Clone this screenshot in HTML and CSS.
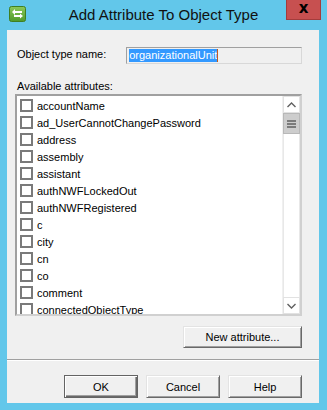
FILE: index.html
```html
<!DOCTYPE html>
<html>
<head>
<meta charset="utf-8">
<link rel="stylesheet" href="styles.css">
</head>
<body>
<div class="window">
  <div class="titlebar">
    <div class="app-icon">
      <svg width="17" height="16" viewBox="0 0 17 16">
        <defs>
          <linearGradient id="g" x1="0" y1="0" x2="0" y2="1">
            <stop offset="0" stop-color="#8cc95a"/>
            <stop offset="1" stop-color="#4e9a2a"/>
          </linearGradient>
        </defs>
        <rect x="0.5" y="0.5" width="16" height="15" rx="2" fill="url(#g)" stroke="#3f7f22"/>
        <path d="M3 6 L6 3 L6 5 L13 5 L13 7 L6 7 L6 9 Z" fill="#fff"/>
        <path d="M14 10 L11 7.5 L11 9 L5 9 L5 11 L11 11 L11 12.5 Z" fill="#fff"/>
      </svg>
    </div>
    <div class="title">Add Attribute To Object Type</div>
    <div class="close-btn"><span>x</span></div>
  </div>
  <div class="client">
    <div class="name-row">
      <span class="label">Object type name:</span>
      <div class="textbox"><span class="sel">organizationalUnit</span><span class="caret"></span></div>
    </div>
    <div class="label avail">Available attributes:</div>
    <div class="listbox">
      <div class="items">
        <div class="item"><span class="cb"></span>accountName</div>
        <div class="item"><span class="cb"></span>ad_UserCannotChangePassword</div>
        <div class="item"><span class="cb"></span>address</div>
        <div class="item"><span class="cb"></span>assembly</div>
        <div class="item"><span class="cb"></span>assistant</div>
        <div class="item"><span class="cb"></span>authNWFLockedOut</div>
        <div class="item"><span class="cb"></span>authNWFRegistered</div>
        <div class="item"><span class="cb"></span>c</div>
        <div class="item"><span class="cb"></span>city</div>
        <div class="item"><span class="cb"></span>cn</div>
        <div class="item"><span class="cb"></span>co</div>
        <div class="item"><span class="cb"></span>comment</div>
        <div class="item"><span class="cb"></span>connectedObjectType</div>
      </div>
      <div class="scrollbar">
        <div class="sb-btn">
          <svg width="9" height="6" viewBox="0 0 9 6"><path d="M0.5 5 L4.5 1 L8.5 5" fill="none" stroke="#606060" stroke-width="1.4"/></svg>
        </div>
        <div class="sb-thumb">
          <svg width="9" height="8" viewBox="0 0 9 8"><path d="M0 1 H9 M0 4 H9 M0 7 H9" stroke="#606060" stroke-width="1.4"/></svg>
        </div>
        <div class="sb-track"></div>
        <div class="sb-btn">
          <svg width="9" height="6" viewBox="0 0 9 6"><path d="M0.5 1 L4.5 5 L8.5 1" fill="none" stroke="#606060" stroke-width="1.4"/></svg>
        </div>
      </div>
    </div>
    <div class="new-row">
      <button class="btn new-btn">New attribute...</button>
    </div>
    <div class="separator"></div>
    <div class="footer">
      <button class="btn default">OK</button>
      <button class="btn">Cancel</button>
      <button class="btn">Help</button>
    </div>
  </div>
</div>
</body>
</html>
```

FILE: styles.css
```css
html, body {
  margin: 0;
  padding: 0;
}
body {
  width: 327px;
  height: 410px;
  background: #62c7ea;
  overflow: hidden;
  font-family: "Liberation Sans", Arial, sans-serif;
  font-size: 11px;
  color: #000;
}
.window {
  display: flex;
  flex-direction: column;
  height: 410px;
}
.titlebar {
  height: 30px;
  display: grid;
  grid-template-columns: 1fr auto 1fr;
  align-items: start;
}
.app-icon {
  padding: 6px 0 0 9px;
  height: 16px;
}
.app-icon svg { display: block; }
.title {
  font-size: 15px;
  color: #111;
  line-height: 17px;
  padding-top: 6px;
}
.close-btn {
  justify-self: end;
  margin-right: 6px;
  width: 33px;
  height: 19px;
  background: #c75050;
  border: 1px solid #a33c3c;
  border-top: none;
  display: flex;
  align-items: center;
  justify-content: center;
}
.close-btn span {
  font-family: "DejaVu Sans", sans-serif;
  font-weight: bold;
  font-size: 15px;
  line-height: 15px;
  color: #000;
  margin-top: -3px;
}
.client {
  margin: 0 8px 7px 7px;
  flex: 1;
  background: #f0f0f0;
  display: flex;
  flex-direction: column;
}
.name-row {
  display: flex;
  align-items: center;
  padding: 17px 17px 0 10px;
}
.label {
  line-height: 13px;
}
.name-row .label {
  width: 110px;
  margin-top: -2px;
}
.textbox {
  width: 173px;
  height: 15px;
  border: 1px solid #a0a0a0;
  border-right-color: #d8d8d8;
  border-bottom-color: #d8d8d8;
  background: #f0f0f0;
  display: flex;
  align-items: center;
  padding-left: 2px;
}
.sel {
  background: #3399ff;
  color: #fff;
  line-height: 13px;
  height: 13px;
}
.caret {
  width: 1px;
  height: 13px;
  background: #c05a20;
}
.avail {
  padding: 16px 0 0 10px;
}
.listbox {
  margin: 1px 17px 0 8px;
  height: 218px;
  border: 2px solid #a0a0a0;
  border-right-color: #d0d0d0;
  border-bottom-color: #d0d0d0;
  background: #fff;
  display: flex;
  overflow: hidden;
}
.items {
  flex: 1;
  padding-top: 1px;
  overflow: hidden;
}
.item {
  height: 17px;
  display: flex;
  align-items: center;
  white-space: nowrap;
  color: #000;
}
.cb {
  width: 9px;
  height: 9px;
  border: 2px solid #7a7a7a;
  background: #fff;
  margin: 0 4px 0 3px;
  flex: none;
}
.scrollbar {
  width: 17px;
  display: flex;
  flex-direction: column;
  background: #fff;
  border-left: 1px solid #f0f0f0;
}
.sb-btn {
  height: 15px;
  border: 1px solid #e2e2e2;
  display: flex;
  align-items: center;
  justify-content: center;
}
.sb-thumb {
  height: 19px;
  background: #cdcdcd;
  border: 1px solid #b8b8b8;
  display: flex;
  align-items: center;
  justify-content: center;
}
.sb-track {
  flex: 1;
  border-left: 1px solid #e8e8e8;
  border-right: 1px solid #e8e8e8;
}
.new-row {
  display: flex;
  justify-content: flex-end;
  padding: 10px 17px 0 0;
}
.btn {
  font-family: "Liberation Sans", Arial, sans-serif;
  font-size: 11px;
  color: #000;
  background: #f0f0f0;
  border: 1px solid #696969;
  border-top-color: #e3e3e3;
  border-left-color: #e3e3e3;
  box-shadow: inset 1px 1px 0 #fff, inset -1px -1px 0 #a0a0a0;
  padding: 0;
  width: 74px;
  height: 23px;
  margin: 0;
}
.new-btn {
  width: 119px;
  height: 22px;
}
.btn.default {
  border: 1px solid #646464;
  box-shadow: inset 1px 1px 0 #fff, inset -1px -1px 0 #696969, inset -2px -2px 0 #a0a0a0;
}
.separator {
  margin-top: 11px;
  height: 1px;
  background: #a0a0a0;
  border-bottom: 1px solid #fff;
}
.footer {
  display: flex;
  justify-content: flex-end;
  gap: 8px;
  padding: 14px 17px 0 0;
}
```
